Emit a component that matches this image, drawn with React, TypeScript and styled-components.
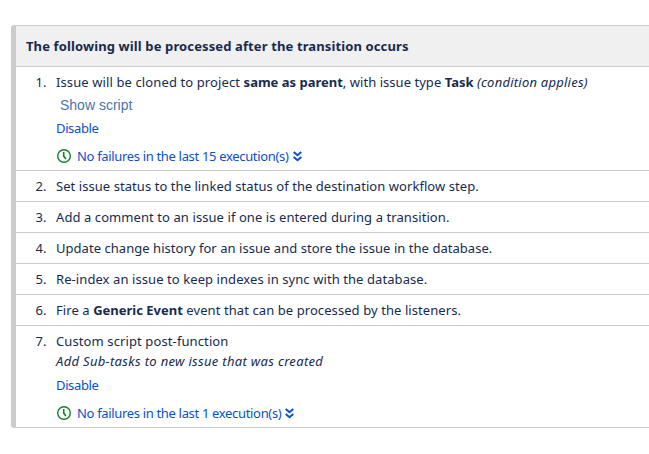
import React from "react";
import styled, { createGlobalStyle } from "styled-components";

const Global = createGlobalStyle`
  body {
    margin: 0;
    background: #fff;
    color: #172b4d;
    font: 13px/20px "Noto Sans", "Open Sans", sans-serif;
    overflow: hidden;
  }
`;

const Panel = styled.section`
  margin: 25px 0 0 11px;
  width: 638px;
  height: 403px;
  box-sizing: border-box;
  border: 1px solid #ccc;
  border-left-width: 5px;
  border-right: 0;
  border-radius: 3px 0 0 3px;
`;

const Heading = styled.h3`
  margin: 0;
  height: 41px;
  box-sizing: border-box;
  padding: 0 10px;
  line-height: 40px;
  font-size: 13px;
  letter-spacing: 0.12px;
  background: #f0f0f0;
  border-bottom: 1px solid #ccc;
  white-space: nowrap;
`;

const List = styled.ol`
  margin: 0;
  padding: 0;
  list-style: none;
`;

const Item = styled.li<{ $height?: number }>`
  display: grid;
  grid-template-columns: 40px 1fr;
  height: ${(p) => p.$height ?? 31}px;
  box-sizing: border-box;
  padding-top: 5px;
  border-bottom: 1px solid #ccc;
  white-space: nowrap;
  &:last-child {
    border-bottom: 0;
  }
`;

const Num = styled.span`
  text-align: right;
  padding-right: 9.5px;
`;

const Text = styled.span<{ $spacing: number }>`
  letter-spacing: ${(p) => p.$spacing}px;
`;

const Strong = styled.b`
  letter-spacing: 0;
`;

const Note = styled.em<{ $spacing: number }>`
  letter-spacing: ${(p) => p.$spacing}px;
`;

const Line = styled.div`
  height: 20px;
`;

const ScriptLink = styled.a`
  display: block;
  height: 26px;
  padding-left: 4px;
  font: 14px/27px "Liberation Sans", Arial, sans-serif;
  color: #4a76aa;
`;

const DisableLink = styled.a<{ $top?: number }>`
  display: block;
  height: 20px;
  margin-top: ${(p) => p.$top ?? 0}px;
  letter-spacing: -0.36px;
  color: #0c50c8;
`;

const Status = styled.a`
  display: flex;
  align-items: center;
  height: 20px;
  margin-top: 8px;
  color: #0c50c8;
`;

const Clock = styled.svg`
  margin: 0 6px 0 1px;
  flex: none;
`;

const Chevrons = styled.svg`
  margin-left: 4px;
  flex: none;
`;

function Executions({ count }: { count: number }) {
  return (
    <Status>
      <Clock width="14" height="14" viewBox="0 0 14 14" fill="none" stroke="#14802c">
        <circle cx="7" cy="7" r="6.3" strokeWidth="1.4" />
        <path d="M6.7 3v4.1l2.2 2.8" strokeWidth="1.6" />
      </Clock>
      <Text $spacing={-0.33}>No failures in the last {count} execution(s)</Text>
      <Chevrons width="9" height="11" viewBox="0 0 9 11" fill="none" stroke="#0c50c8" strokeWidth="2">
        <path d="M.7 1l3.8 3.2L8.3 1M.7 6l3.8 3.2L8.3 6" />
      </Chevrons>
    </Status>
  );
}

export default function App() {
  return (
    <>
      <Global />
      <Panel>
        <Heading>The following will be processed after the transition occurs</Heading>
        <List>
          <Item $height={104}>
            <Num>1.</Num>
            <div>
              <Line>
                <Text $spacing={0.11}>Issue will be cloned to project </Text>
                <Strong>same as parent</Strong>
                <Text $spacing={0.04}>, with issue type </Text>
                <Strong>Task</Strong> <Note $spacing={0.24}>(condition applies)</Note>
              </Line>
              <ScriptLink>Show script</ScriptLink>
              <DisableLink>Disable</DisableLink>
              <Executions count={15} />
            </div>
          </Item>
          <Item>
            <Num>2.</Num>
            <Text $spacing={0.06}>Set issue status to the linked status of the destination workflow step.</Text>
          </Item>
          <Item>
            <Num>3.</Num>
            <Text $spacing={0.08}>Add a comment to an issue if one is entered during a transition.</Text>
          </Item>
          <Item>
            <Num>4.</Num>
            <Text $spacing={0.04}>Update change history for an issue and store the issue in the database.</Text>
          </Item>
          <Item>
            <Num>5.</Num>
            <Text $spacing={0.08}>Re-index an issue to keep indexes in sync with the database.</Text>
          </Item>
          <Item>
            <Num>6.</Num>
            <Text $spacing={0.08}>
              Fire a <Strong>Generic Event</Strong> event that can be processed by the listeners.
            </Text>
          </Item>
          <Item $height={101}>
            <Num>7.</Num>
            <div>
              <Line>
                <Text $spacing={0.11}>Custom script post-function</Text>
              </Line>
              <Line>
                <Note $spacing={0.32}>Add Sub-tasks to new issue that was created</Note>
              </Line>
              <DisableLink $top={4}>Disable</DisableLink>
              <Executions count={1} />
            </div>
          </Item>
        </List>
      </Panel>
    </>
  );
}
